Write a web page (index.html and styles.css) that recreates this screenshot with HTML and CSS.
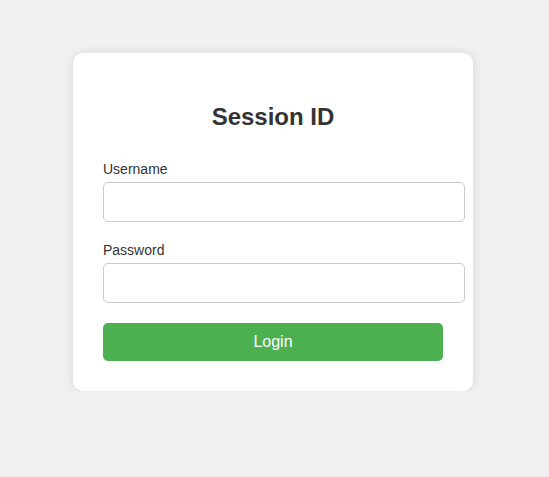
FILE: index.html
```html
<!DOCTYPE html>
<html lang="en">
<head>
<meta charset="utf-8">
<title>Session ID</title>
<link rel="stylesheet" href="styles.css">
</head>
<body>
<div class="card">
  <h2 class="title">Session ID</h2>
  <form class="form">
    <div class="group">
      <label class="label" for="username">Username</label>
      <input class="input" type="text" id="username">
    </div>
    <div class="group">
      <label class="label" for="password">Password</label>
      <input class="input" type="password" id="password">
    </div>
    <button class="btn" type="button">Login</button>
  </form>
</div>
</body>
</html>
```
FILE: styles.css
```css
html, body {
  margin: 0;
  padding: 0;
}
body {
  background: #f0f0f0;
  font-family: "Liberation Sans", Arial, sans-serif;
  color: #333;
  padding: 53px 0 0 73px;
}
.card {
  width: 400px;
  box-sizing: border-box;
  background: #fff;
  border-radius: 10px;
  box-shadow: 0 0 10px rgba(0, 0, 0, 0.1);
  padding: 30px;
}
.title {
  margin: 20px 0 30px;
  font-size: 24px;
  font-weight: bold;
  text-align: center;
  color: #333;
  line-height: 28px;
}
.group {
  margin-bottom: 20px;
}
.label {
  display: block;
  font-size: 14px;
  line-height: 16px;
  margin-bottom: 5px;
  color: #333;
}
.input {
  display: block;
  width: 362px;
  height: 40px;
  box-sizing: border-box;
  padding: 10px;
  border: 1px solid #ccc;
  border-radius: 5px;
  font-size: 16px;
  font-family: inherit;
  margin: 0;
}
.btn {
  display: block;
  width: 340px;
  height: 38px;
  border: none;
  border-radius: 5px;
  background: #4caf50;
  color: #fff;
  font-size: 16px;
  font-family: inherit;
  cursor: pointer;
  margin: 0;
}
```
